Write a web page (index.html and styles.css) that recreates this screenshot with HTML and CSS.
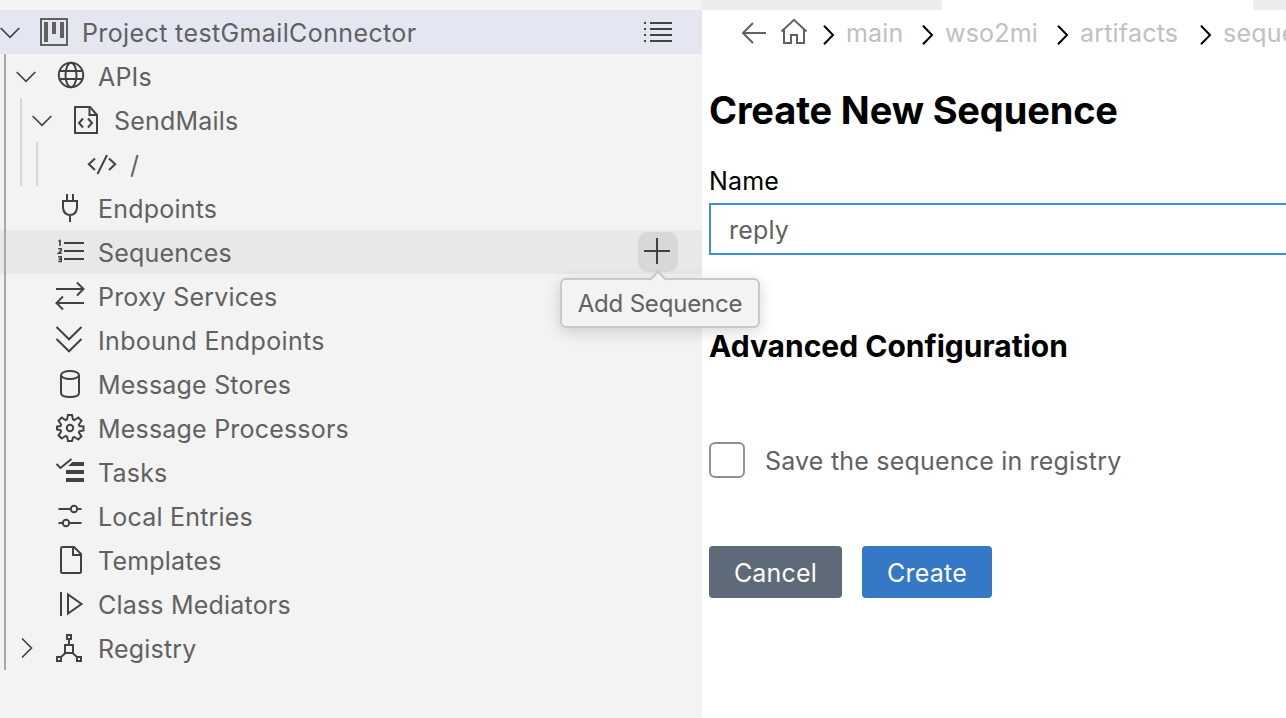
FILE: index.html
```
<!DOCTYPE html>
<html lang="en">
<head>
<meta charset="utf-8">
<title>Create New Sequence</title>
<link rel="stylesheet" href="styles.css">
</head>
<body>
<div class="app">
  <aside class="sidebar">
    <div class="row selected">
      <svg class="chev" viewBox="0 0 38 44"><path d="M.7 18l9.3 9.4 9.3-9.4"/></svg>
      <svg class="icon muted" viewBox="0 0 34 44"><path d="M3 9h26v26H3z"/><path class="fill" d="M6 12h4v20H6zM14 12h4v12h-4zM22 12h4v16h-4z"/></svg>
      <span class="label l-project">Project testGmailConnector</span>
      <svg class="list-action" viewBox="0 0 30 44"><path d="M7 13h22M7 19h22M7 25h22M7 31h22M1 13h2M1 19h2M1 25h2M1 31h2"/></svg>
    </div>
    <div class="row">
      <i class="guide active"></i>
      <svg class="chev" viewBox="0 0 38 44"><path d="M.7 18l9.3 9.4 9.3-9.4"/></svg>
      <svg class="icon" viewBox="0 0 34 44"><circle cx="17" cy="21" r="12.2"/><ellipse cx="17" cy="21" rx="5.5" ry="12.2"/><path d="M5.5 17h23M5.5 25h23"/></svg>
      <span class="label">APIs</span>
    </div>
    <div class="row">
      <i class="guide active"></i><i class="guide"></i>
      <svg class="chev" viewBox="0 0 38 44"><path d="M.7 18l9.3 9.4 9.3-9.4"/></svg>
      <svg class="icon" viewBox="0 0 34 44"><path d="M5 9h15l7 8v18H5z"/><path d="M19.500 9v8h7.500M13 20.500l-4 4.500 4 4.500M18 20.500l4 4.500-4 4.500"/></svg>
      <span class="label">SendMails</span>
    </div>
    <div class="row">
      <i class="guide active"></i><i class="guide"></i><i class="guide"></i>
      <svg class="chev" viewBox="0 0 38 44"></svg>
      <svg class="icon" viewBox="0 0 34 44"><path d="M9 16.500l-6.200 5.800 6.200 5.800M23 16.500l6.200 5.800-6.200 5.800M21 13l-9.500 19"/></svg>
      <span class="label slash">/</span>
    </div>
    <div class="row">
      <i class="guide active"></i>
      <svg class="chev" viewBox="0 0 38 44"></svg>
      <svg class="icon" viewBox="0 0 34 44"><path d="M13 8v7M19 8v7M9 15h14v7q-1 7-7 7t-7-7zM16 29v7"/></svg>
      <span class="label">Endpoints</span>
    </div>
    <div class="row hovered">
      <i class="guide active"></i>
      <svg class="chev" viewBox="0 0 38 44"></svg>
      <svg class="icon" viewBox="0 0 34 44"><path d="M10 13h20M10 21h20M10 29h20"/><path class="digits" d="M4.500 11.200l1.500-.7v5.500M4.200 18.800h3v1.700l-2.600 2.700h3.200M4.200 26.800h3v4.700h-3M4.700 29.100h2.500"/></svg>
      <span class="label">Sequences</span>
      <span class="add"><svg class="plus" viewBox="0 0 40 40"><path d="M6 19h26M19 6v26"/></svg>
        <span class="tooltip">Add Sequence<svg class="tip" viewBox="0 0 20 12"><path d="M2 11l8-8.500 8 8.500"/></svg></span>
      </span>
    </div>
    <div class="row">
      <i class="guide active"></i>
      <svg class="chev" viewBox="0 0 38 44"></svg>
      <svg class="icon" viewBox="0 0 34 44"><path d="M2 15h27.500M23 8.500l6.500 6.500-6.500 6.500M30 29H2.500M9 22.500L2.500 29l6.500 6.500"/></svg>
      <span class="label">Proxy Services</span>
    </div>
    <div class="row">
      <i class="guide active"></i>
      <svg class="chev" viewBox="0 0 38 44"></svg>
      <svg class="icon" viewBox="0 0 34 44"><path d="M2.500 9L15 21.300 27.500 9M2.500 21L15 33.300 27.500 21"/></svg>
      <span class="label l-wide">Inbound Endpoints</span>
    </div>
    <div class="row">
      <i class="guide active"></i>
      <svg class="chev" viewBox="0 0 38 44"></svg>
      <svg class="icon" viewBox="0 0 34 44"><ellipse cx="16" cy="13" rx="9" ry="4"/><path d="M7 13v18q0 4 9 4t9-4V13"/></svg>
      <span class="label">Message Stores</span>
    </div>
    <div class="row">
      <i class="guide active"></i>
      <svg class="chev" viewBox="0 0 38 44"></svg>
      <svg class="icon" viewBox="0 0 34 44"><path d="M14 9h4l1 4.500 1.500.600L24.300 11.500l3.200 3.200-2.600 3.800.600 1.500 4 .500v4l-4 .700-.600 1.500 2.600 3.600-3.200 3.200-3.800-2.500-1.500.600L18 35h-4l-1-4.400-1.500-.600-3.800 2.500-3.200-3.200 2.600-3.600-.600-1.500L3 23.500v-3l3.500-.500.600-1.500-2.600-3.800 3.200-3.200 3.800 2.600 1.500-.600z"/><circle cx="16" cy="22" r="3.200"/></svg>
      <span class="label">Message Processors</span>
    </div>
    <div class="row">
      <i class="guide active"></i>
      <svg class="chev" viewBox="0 0 38 44"></svg>
      <svg class="icon" viewBox="0 0 34 44"><path d="M2.500 14l4 4L17.500 9"/><path class="fill" d="M18.500 12H30v4H14zM12 20h18v4H12zM12 28h18v4H12z"/></svg>
      <span class="label">Tasks</span>
    </div>
    <div class="row">
      <i class="guide active"></i>
      <svg class="chev" viewBox="0 0 38 44"></svg>
      <svg class="icon" viewBox="0 0 34 44"><path d="M4.500 15H17M23 15h4.500M4.500 29H9M15 29h12.500"/><circle cx="20" cy="15" r="3.200"/><circle cx="12" cy="29" r="3.200"/></svg>
      <span class="label">Local Entries</span>
    </div>
    <div class="row">
      <i class="guide active"></i>
      <svg class="chev" viewBox="0 0 38 44"></svg>
      <svg class="icon" viewBox="0 0 34 44"><path d="M8.500 9H20l7 7v17.500q0 1.500-1.500 1.500h-17Q7 35 7 33.500v-23Q7 9 8.500 9zM19 9v8h8"/></svg>
      <span class="label">Templates</span>
    </div>
    <div class="row">
      <i class="guide active"></i>
      <svg class="chev" viewBox="0 0 38 44"></svg>
      <svg class="icon" viewBox="0 0 34 44"><path d="M7 10v24M14 12.500v19L27.500 22z"/></svg>
      <span class="label">Class Mediators</span>
    </div>
    <div class="row">
      <i class="guide active"></i>
      <svg class="chev" viewBox="0 0 38 44"><path d="M6 12.500l9.500 9.500L6 31.500"/></svg>
      <svg class="icon" viewBox="0 0 34 44"><path d="M13 9h4v4h-4zM11 19h8v8h-8zM3 31h4v4H3zM23 31h4v4h-4zM15 13v6M11.500 27L7 31M18.500 27l4.500 4"/></svg>
      <span class="label">Registry</span>
    </div>
  </aside>

  <main class="editor">
    <div class="tabs"><span class="tab-active"></span></div>
    <nav class="crumbs">
      <svg class="back" viewBox="0 0 28 44"><path d="M26 23H3M13 13L3 23l10 10"/></svg>
      <svg class="home" viewBox="0 0 28 44"><path d="M1.500 21.500L14 9.800l12.500 11.700M4 19.500V33h7v-8h6v8h7V19.500"/></svg>
      <svg class="sep" viewBox="0 0 12 44"><path d="M1 15.800l9 9.200-9 9.200"/></svg>
      <span class="crumb c1">main</span>
      <svg class="sep" viewBox="0 0 12 44"><path d="M1 15.800l9 9.200-9 9.200"/></svg>
      <span class="crumb c2">wso2mi</span>
      <svg class="sep" viewBox="0 0 12 44"><path d="M1 15.800l9 9.200-9 9.200"/></svg>
      <span class="crumb c3">artifacts</span>
      <svg class="sep" viewBox="0 0 12 44"><path d="M1 15.800l9 9.200-9 9.200"/></svg>
      <span class="crumb">seque</span>
    </nav>
    <form class="form">
      <h1 class="title">Create New Sequence</h1>
      <label class="field-label">Name</label>
      <div class="field">reply</div>
      <h2 class="subtitle">Advanced Configuration</h2>
      <div class="check"><span class="box"></span><span class="check-text">Save the sequence in registry</span></div>
      <div class="actions">
        <span class="btn cancel">Cancel</span>
        <span class="btn create">Create</span>
      </div>
    </form>
  </main>
</div>
</body>
</html>
```
FILE: styles.css
```
* { box-sizing: border-box; }
body {
  margin: 0;
  font-family: Inter, "Liberation Sans", sans-serif;
  font-size: 25px;
  font-weight: 430;
  letter-spacing: .2px;
  color: #616161;
}
svg { fill: none; stroke: #424242; stroke-width: 2; flex: none; display: block; }
.app { display: flex; width: 1286px; height: 718px; overflow: hidden; }

.sidebar { flex: none; width: 702px; padding-top: 10px; background: #f3f3f3; }
.row { display: flex; align-items: center; height: 44px; }
.selected { background: #e4e6f1; }
.hovered { background: #e8e8e8; }
.guide { flex: none; width: 16px; height: 44px; padding-left: 4px; }
.guide::before { content: ""; display: block; width: 2px; height: 44px; background: #d6d6d6; }
.guide.active::before { background: #a9a9a9; }
.chev { width: 38px; height: 44px; stroke-width: 1.7; }
.icon { width: 34px; height: 44px; margin-right: 10px; }
.muted { stroke: #616161; }
.fill { fill: #424242; stroke: none; }
.muted .fill { fill: #616161; }
.digits { stroke-width: 1.6; }
.label { line-height: 44px; padding-top: 2px; white-space: nowrap; }
.l-project { letter-spacing: .38px; }
.l-wide { letter-spacing: .34px; }
.list-action { width: 30px; height: 44px; margin-left: auto; margin-right: 29px; }

.add {
  position: relative;
  flex: none;
  width: 40px;
  height: 40px;
  margin-left: auto;
  margin-right: 24px;
  border-radius: 10px;
  background: #d8d8d8;
}
.plus { width: 40px; height: 40px; }
.tooltip {
  position: absolute;
  z-index: 2;
  top: 46px;
  left: -78px;
  width: 200px;
  height: 50px;
  border: 2px solid #c8c8c8;
  border-radius: 6px;
  background: #f3f3f3;
  box-shadow: 0 4px 16px rgba(0, 0, 0, .16);
  font-size: 24px;
  letter-spacing: -.2px;
  line-height: 47px;
  text-align: center;
  white-space: nowrap;
}
.tip { position: absolute; top: -11px; left: 86px; width: 20px; height: 12px; fill: #f3f3f3; stroke: #c8c8c8; }

.editor { flex: 1; min-width: 0; background: #fff; overflow: hidden; }
.tabs { height: 10px; background: #ececec; padding-left: 239px; }
.tab-active { display: block; width: 313px; height: 10px; background: #fff; border: solid #f3f3f3; border-width: 0 1px; }
.crumbs { display: flex; align-items: center; height: 44px; padding-left: 38px; color: #c0c0c0; white-space: nowrap; }
.crumbs svg { height: 44px; stroke: #616161; }
.back { width: 28px; margin-right: 12px; }
.home { width: 28px; margin-right: 15px; }
.crumbs .sep { width: 12px; stroke: #000; }
.crumb { flex: none; padding: 2px 0 0 11px; }
.c1 { width: 87px; }
.c2 { width: 123px; }
.c3 { width: 131px; }

.form { padding-left: 7px; color: #000; }
.title { margin: 31px 0 0; height: 50px; line-height: 50px; font-size: 38px; font-weight: 700; letter-spacing: -.15px; white-space: nowrap; }
.field-label { display: block; margin-top: 30px; height: 38px; line-height: 32px; }
.field { height: 52px; width: 640px; border: 2px solid #3e8ee8; padding-left: 18px; line-height: 50px; color: #616161; }
.subtitle { margin: 71px 0 0; height: 42px; line-height: 41px; font-size: 30px; font-weight: 700; letter-spacing: 0; white-space: nowrap; }
.check { display: flex; align-items: center; height: 36px; margin-top: 74px; color: #616161; }
.box { width: 36px; height: 36px; border: 2px solid #919191; border-radius: 6px; margin-right: 20px; }
.check-text { line-height: 36px; padding-top: 2px; }
.actions { display: flex; gap: 20px; margin-top: 68px; }
.btn { height: 52px; line-height: 54px; border-radius: 4px; color: #fff; text-align: center; }
.cancel { width: 133px; background: #5f6a79; }
.create { width: 130px; background: #3478c6; }
```
